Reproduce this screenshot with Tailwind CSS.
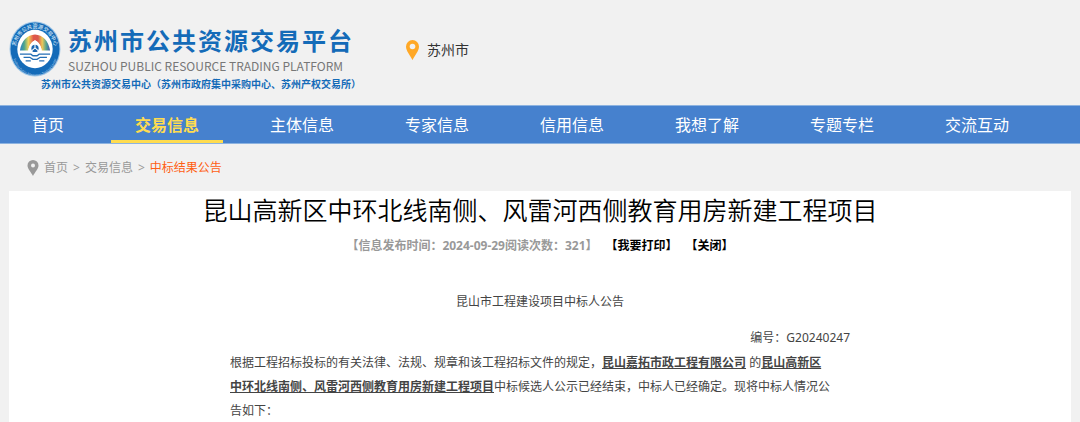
<!DOCTYPE html>
<html lang="zh-CN">
<head>
    <meta charset="UTF-8">
    <meta name="viewport" content="width=device-width, initial-scale=1.0">
    <title>苏州市公共资源交易平台</title>
    <script src="https://cdn.jsdelivr.net/npm/@tailwindcss/browser@4"></script>
</head>
<body class="bg-[#f1f1f1] font-['Noto_Sans','Noto_Sans_CJK_SC',sans-serif] text-xs text-[#444]">

    <!-- 页头 -->
    <header class="flex h-[105px] items-start pl-[9px]">
        <a href="#" class="flex w-[352px] flex-col pt-[21px]">
            <span class="flex">
                <svg class="h-14 w-[52px] shrink-0" viewBox="0 0 100 108" preserveAspectRatio="none" aria-hidden="true">
                    <defs>
                        <path id="ring-top" d="M15 67 A37 40 0 1 1 85 67"/>
                        <path id="ring-bottom" d="M7 60 A43 46 0 0 0 93 60"/>
                        <linearGradient id="rainbow" x1="0" x2="1">
                            <stop offset="0" stop-color="#2b7fc8"/>
                            <stop offset=".14" stop-color="#4aa58c"/>
                            <stop offset=".28" stop-color="#efd35a"/>
                            <stop offset=".45" stop-color="#e2574a"/>
                            <stop offset=".6" stop-color="#d8584e"/>
                            <stop offset=".74" stop-color="#eec757"/>
                            <stop offset=".87" stop-color="#56a58e"/>
                            <stop offset="1" stop-color="#3c55b0"/>
                        </linearGradient>
                    </defs>
                    <ellipse cx="50" cy="54" rx="49" ry="53" fill="#9cc4e6"/>
                    <ellipse cx="50" cy="54" rx="47" ry="51" fill="#146bb8"/>
                    <ellipse cx="50" cy="54" rx="34" ry="37" fill="#fff"/>
                    <text font-size="10" font-weight="500" fill="#d4e6f5" text-anchor="middle"><textPath href="#ring-top" startOffset="50%">苏州市公共资源交易中心</textPath></text>
                    <text font-size="6" fill="#b4d2ec" text-anchor="middle"><textPath href="#ring-bottom" startOffset="50%">Suzhou Public Resources Trading Center</textPath></text>
                    <path d="M21 57 C24 38 35 27 50 26 C65 27 76 38 79 57 L63 57 C61 46 57 40 50 37 C43 40 39 46 37 57Z" fill="url(#rainbow)"/>
                    <path d="M37 57 C39 46 44 40 50 37 C56 40 61 46 63 57Z" fill="#fff"/>
                    <circle cx="50" cy="53" r="7" fill="#1c66b0"/>
                    <path d="M50 45 V52 M50 52 L43 58 M50 52 L57 58" stroke="#fff" stroke-width="2"/>
                    <path d="M21 64 H42 L46 67 H54 L58 64 H79 M28 70 H40 L46 74 H54 L60 70 H73 M32 77 H42 M58 77 H68" fill="none" stroke="#236eb5" stroke-width="2.5"/>
                </svg>
                <span class="flex flex-col pl-[7px] whitespace-nowrap">
                    <span class="pt-1 text-2xl leading-8 font-bold tracking-[2px] text-[#146bb8]">苏州市公共资源交易平台</span>
                    <span class="font-['Noto_Sans_CJK_SC',sans-serif] text-xs leading-[18px] text-[#777]">SUZHOU PUBLIC RESOURCE TRADING PLATFORM</span>
                </span>
            </span>
            <span class="pl-8 text-[10px] leading-[14px] font-bold whitespace-nowrap text-[#146bb8]">苏州市公共资源交易中心（苏州市政府集中采购中心、苏州产权交易所）</span>
        </a>
        <a href="#" class="ml-[45px] flex items-center gap-2 pt-10 text-sm text-[#333]">
            <svg class="h-5 w-[13px]" viewBox="0 0 13 20" aria-hidden="true">
                <path d="M6.5 0 A6.5 6.5 0 0 1 13 6.5 C13 11 9 15 6.5 20 C4 15 0 11 0 6.5 A6.5 6.5 0 0 1 6.5 0Z" fill="#ffa826"/>
                <circle cx="6.5" cy="6.5" r="2.8" fill="#f1f1f1"/>
            </svg>
            苏州市
        </a>
    </header>

    <!-- 主导航 -->
    <nav class="flex h-[39px] gap-[23px] border-y border-[#8db3e0] bg-[#4681ce] pl-2 text-base leading-[38px] whitespace-nowrap text-white">
        <a href="#" class="px-6">首页</a>
        <a href="#" class="border-b-3 border-[#ffdc50] px-6 font-bold text-[#ffdc50]">交易信息</a>
        <a href="#" class="px-6">主体信息</a>
        <a href="#" class="px-6">专家信息</a>
        <a href="#" class="px-6">信用信息</a>
        <a href="#" class="px-6">我想了解</a>
        <a href="#" class="px-6">专题专栏</a>
        <a href="#" class="px-6">交流互动</a>
    </nav>

    <!-- 当前位置 -->
    <div class="flex h-[47px] items-center gap-[5px] pl-[27px] text-[#999]">
        <svg class="h-4 w-3" viewBox="0 0 11 16" aria-hidden="true">
            <path d="M5.5 0 A5.5 5.5 0 0 1 11 5.5 C11 9 7.5 12 5.5 16 C3.5 12 0 9 0 5.5 A5.5 5.5 0 0 1 5.5 0Z" fill="#999"/>
            <circle cx="5.5" cy="5.5" r="2" fill="#f1f1f1"/>
        </svg>
        <a href="#">首页</a>
        <span>&gt;</span>
        <a href="#">交易信息</a>
        <span>&gt;</span>
        <a href="#" class="text-[#ff5f14]">中标结果公告</a>
    </div>

    <!-- 公告正文 -->
    <main class="mx-[9px] bg-white pb-2">
        <h1 class="text-center text-[25px] leading-[38px] font-[350] text-black">昆山高新区中环北线南侧、风雷河西侧教育用房新建工程项目</h1>
        <div class="flex justify-center gap-2 pt-[7px] leading-5 font-bold text-black">
            <span class="text-[#999]">【信息发布时间：2024-09-29阅读次数：321】</span>
            <button type="button" class="font-bold">【我要打印】</button>
            <button type="button" class="font-bold">【关闭】</button>
        </div>
        <article class="mx-auto max-w-[620px] pt-[34px] leading-6">
            <p class="text-center">昆山市工程建设项目中标人公告</p>
            <p class="pt-3 text-right">编号：G20240247</p>
            <p class="pt-px">
                根据工程招标投标的有关法律、法规、规章和该工程招标文件的规定，<b class="underline">昆山嘉拓市政工程有限公司</b> 的<b class="underline">昆山高新区<br>
                中环北线南侧、风雷河西侧教育用房新建工程项目</b>中标候选人公示已经结束，中标人已经确定。现将中标人情况公<br>
                告如下：
            </p>
        </article>
    </main>

</body>
</html>
